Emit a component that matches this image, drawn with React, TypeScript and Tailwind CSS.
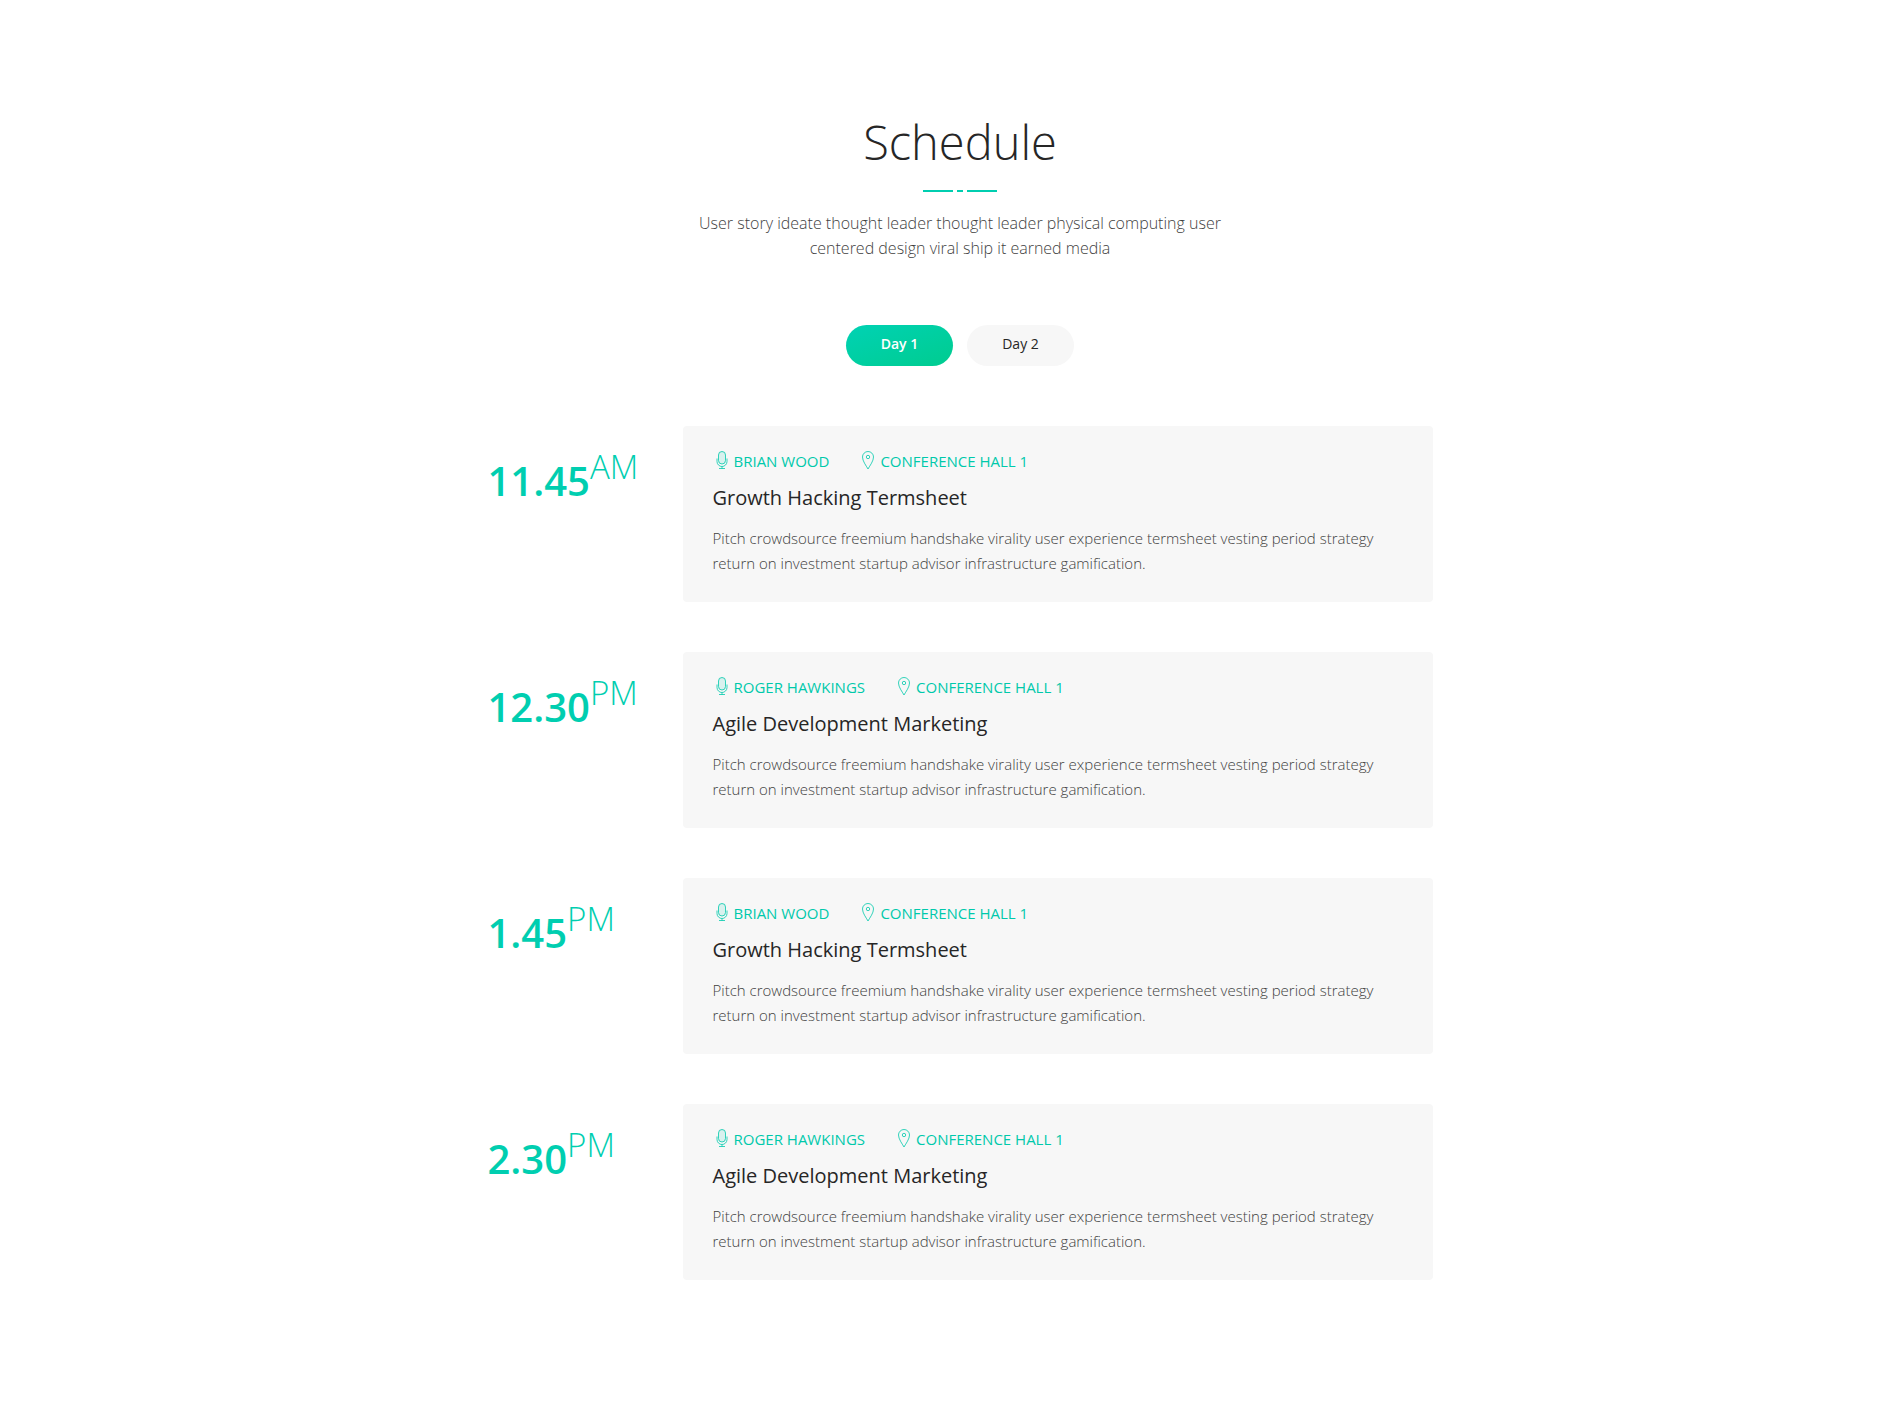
import React, { useState } from "react";

type Session = {
  time: string;
  period: string;
  speaker: string;
  hall: string;
  title: string;
};

const summary =
  "Pitch crowdsource freemium handshake virality user experience termsheet vesting period strategy return on investment startup advisor infrastructure gamification.";

const sessions: Session[] = [
  { time: "11.45", period: "AM", speaker: "Brian Wood", hall: "Conference Hall 1", title: "Growth Hacking Termsheet" },
  { time: "12.30", period: "PM", speaker: "Roger Hawkings", hall: "Conference Hall 1", title: "Agile Development Marketing" },
  { time: "1.45", period: "PM", speaker: "Brian Wood", hall: "Conference Hall 1", title: "Growth Hacking Termsheet" },
  { time: "2.30", period: "PM", speaker: "Roger Hawkings", hall: "Conference Hall 1", title: "Agile Development Marketing" },
];

const days = ["Day 1", "Day 2"];

function MicIcon() {
  return (
    <svg className="h-5 w-[18px] shrink-0" viewBox="0 0 18 20" fill="none" stroke="currentColor" strokeWidth="0.8" aria-hidden="true">
      <rect x="5.500" y="0.500" width="7" height="12.500" rx="3.500" fill="currentColor" fillOpacity="0.12" />
      <path d="M4 7.500v3a5 5 0 0 0 10 0v-3M9 15.500v2M6 17.500h6" />
    </svg>
  );
}

function PinIcon() {
  return (
    <svg className="h-5 w-[18px] shrink-0" viewBox="0 0 18 20" fill="none" stroke="currentColor" strokeWidth="0.8" aria-hidden="true">
      <path d="M9 18C7 14.500 3.500 10 3.500 6a5.500 5.500 0 0 1 11 0C14.500 10 11 14.500 9 18Z" />
      <circle cx="9" cy="6" r="1.700" />
    </svg>
  );
}

function SessionRow({ session }: { session: Session }) {
  return (
    <li className="flex flex-col sm:flex-row">
      <div className="shrink-0 pt-6 text-[40px] leading-[50px] font-semibold whitespace-nowrap text-[#00ceb0] sm:w-[195px]">
        {session.time}
        <span className="align-[17px] text-[33px] leading-none font-light">{session.period}</span>
      </div>
      <article className="flex-1 rounded bg-[#f7f7f7] px-[30px] pt-[25px] pb-[26px]">
        <div className="flex flex-wrap gap-x-[30px] text-[15px] leading-5 text-[#00c9ab] uppercase">
          <span className="flex items-center gap-[3px]">
            <MicIcon />
            {session.speaker}
          </span>
          <span className="flex items-center gap-[3px]">
            <PinIcon />
            {session.hall}
          </span>
        </div>
        <h3 className="mt-3 text-[20px] leading-[30px] text-[#262626]">{session.title}</h3>
        <p className="mt-[13px] text-[15px] leading-[25px] font-light text-[#3f3f3f]">{summary}</p>
      </article>
    </li>
  );
}

export default function App() {
  const [day, setDay] = useState(0);
  return (
    <main className="bg-white pt-[117px] pb-[125px] pl-[17px] font-['Open_Sans',sans-serif]">
      <section className="mx-auto max-w-[945px]">
        <header className="flex flex-col items-center text-center">
          <h2 className="text-[47px] leading-[50px] font-light text-[#262626]">Schedule</h2>
          <div className="mt-[23px] flex gap-1" aria-hidden="true">
            <span className="h-[2px] w-[30px] bg-[#00ceb0]" />
            <span className="h-[2px] w-[6px] bg-[#00ceb0]" />
            <span className="h-[2px] w-[30px] bg-[#00ceb0]" />
          </div>
          <p className="mt-[19px] max-w-[555px] text-[16px] leading-[25px] font-light text-[#3f3f3f]">
            User story ideate thought leader thought leader physical computing user centered design viral ship it earned
            media
          </p>
        </header>
        <div className="mt-[64px] flex justify-center gap-[14px]" role="tablist" aria-label="Schedule day">
          {days.map((label, i) => (
            <button
              key={label}
              type="button"
              role="tab"
              aria-selected={day === i}
              onClick={() => setDay(i)}
              className={
                day === i
                  ? "h-[41px] w-[107px] rounded-full bg-linear-to-br from-[#00d2b4] to-[#00cc8f] pb-1 text-[14px] font-semibold text-white"
                  : "h-[41px] w-[107px] rounded-full bg-[#f7f7f7] pb-1 text-[14px] text-[#262626]"
              }
            >
              {label}
            </button>
          ))}
        </div>
        <ul className="mt-[60px] flex flex-col gap-[50px]">
          {sessions.map((s) => (
            <SessionRow key={s.time} session={s} />
          ))}
        </ul>
      </section>
    </main>
  );
}
